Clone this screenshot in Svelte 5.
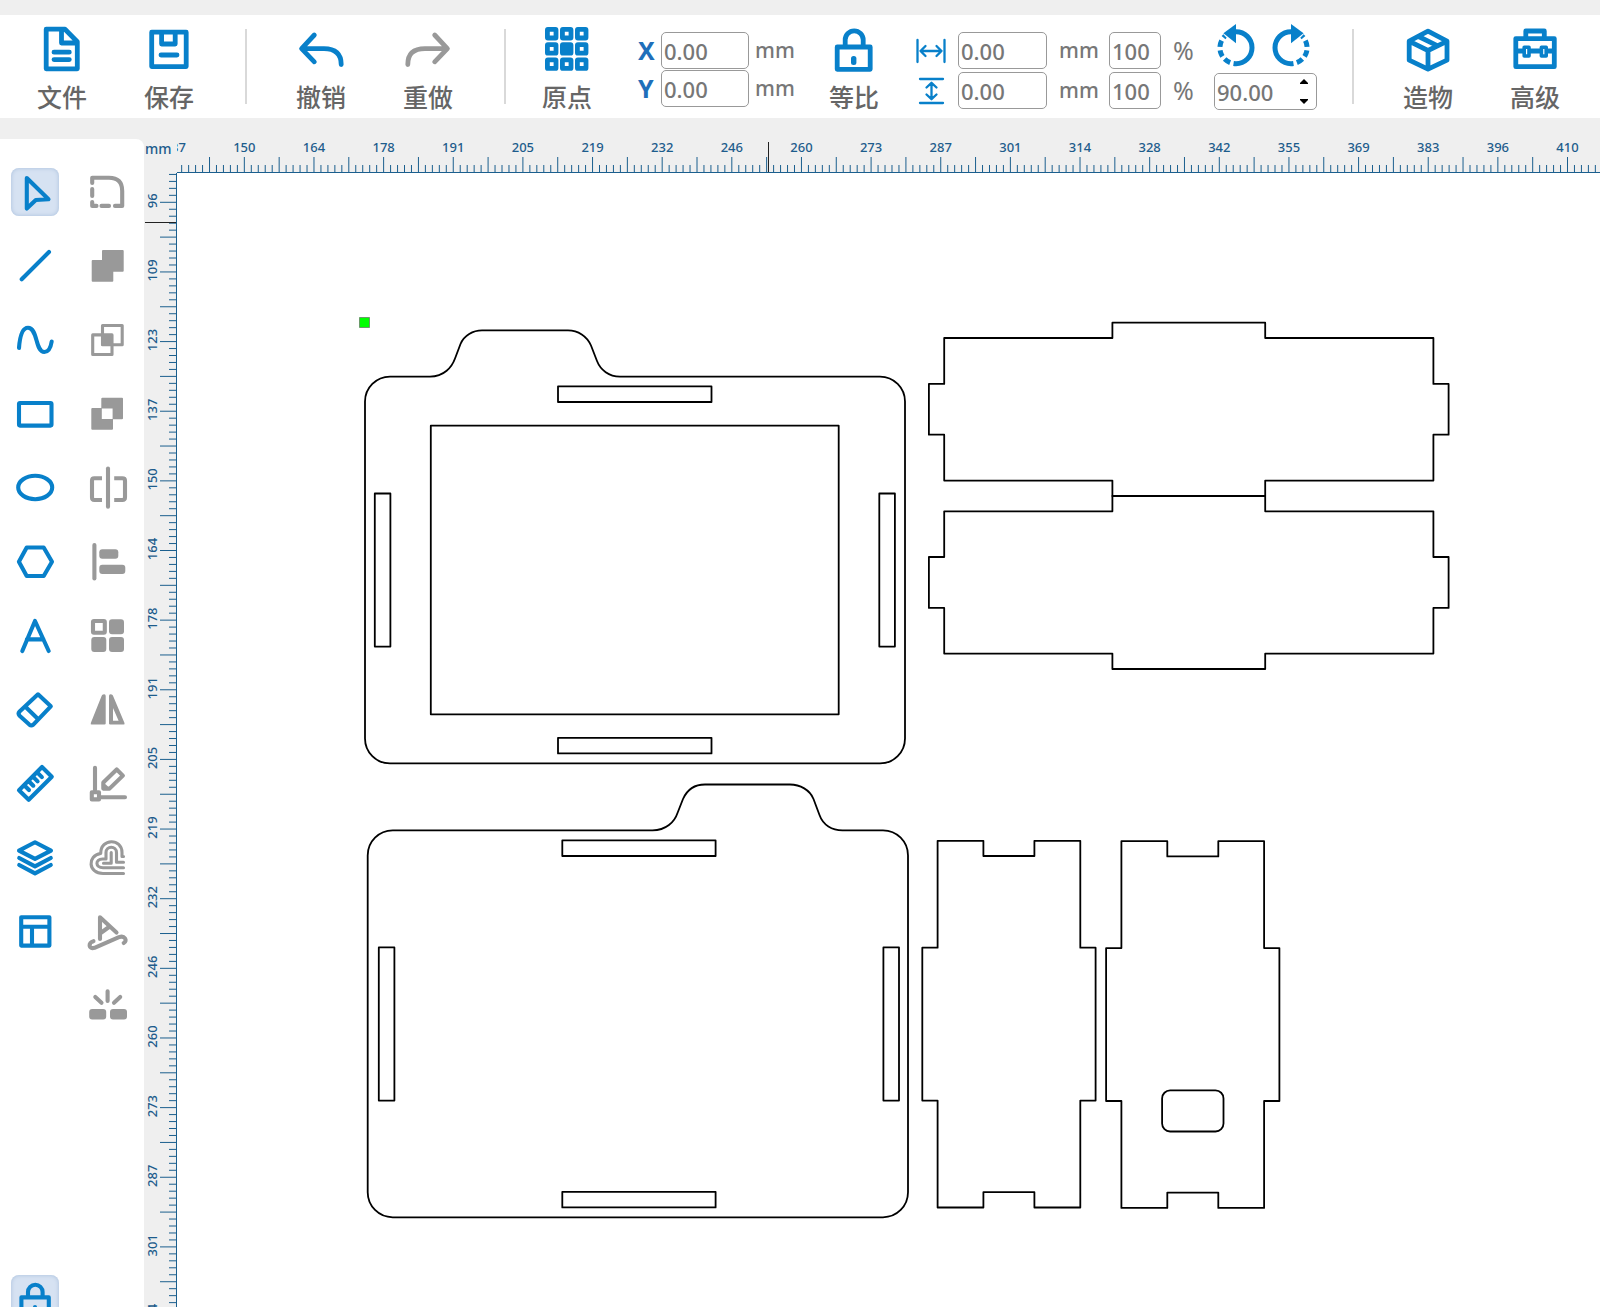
<script>
  const topLabels = [137, 150, 164, 178, 191, 205, 219, 232, 246, 260, 273, 287, 301, 314, 328, 342, 355, 369, 383, 396, 410];
  const sideLabels = [96, 109, 123, 137, 150, 164, 178, 191, 205, 219, 232, 246, 260, 273, 287, 301, 314];
  const step = 69.64;

  function makeTicks(start, count) {
    return Array.from({ length: count }, (_, i) => ({
      pos: start + (i * step) / 10,
      long: i % 5 === 0
    }));
  }

  const topTicks = makeTicks(-2.3, 400);
  const sideTicks = makeTicks(29.3 - step, 300);

  let x = $state('0.00');
  let y = $state('0.00');
  let width = $state('0.00');
  let height = $state('0.00');
  let scaleX = $state('100');
  let scaleY = $state('100');
  let angle = $state('90.00');

  function turn(delta) {
    angle = (parseFloat(angle) + delta).toFixed(2);
  }

  const tools = [
    ['选择', 'select'], ['圆角', 'fillet'],
    ['直线', 'line'], ['并集', 'union'],
    ['曲线', 'curve'], ['交集', 'intersect'],
    ['矩形', 'rect'], ['差集', 'exclude'],
    ['椭圆', 'ellipse'], ['拆分', 'split'],
    ['多边形', 'hexagon'], ['对齐', 'align'],
    ['文本', 'text'], ['阵列', 'array'],
    ['橡皮擦', 'eraser'], ['镜像', 'mirror'],
    ['测量', 'ruler'], ['编辑节点', 'node'],
    ['图层', 'layers'], ['偏移', 'offset'],
    ['布局', 'layout'], ['路径文字', 'pathtext'],
    ['', ''], ['打散', 'explode']
  ];
</script>

{#snippet toolIcon(name)}
  <svg class="icon" viewBox="0 0 48 48" aria-hidden="true">
    {#if name === 'select'}
      <path d="M15.8 10 37.5 31.3 24.8 32 15.8 40.6Z" />
    {:else if name === 'fillet'}
      <path d="M9.2 15V9.8H26Q39.2 9.8 39.2 23V37.9H32M9.2 21V28M9.2 34V37.9H13.5M18.5 37.9H26" />
    {:else if name === 'line'}
      <path d="M10.7 37.3 38 10" />
    {:else if name === 'union'}
      <path class="fill" d="M20 8H39.7Q40.7 8 40.7 9V28.7Q40.7 29.7 39.7 29.7H30.3V38.7Q30.3 39.7 29.3 39.7H9.7Q8.7 39.7 8.7 38.7V19Q8.7 18 9.7 18H19V9Q19 8 20 8Z" />
    {:else if name === 'curve'}
      <path d="M8 32C9 18 12 11.7 17 11.7C27 11.7 24 36 33.3 36C38 36 40 30 40.7 25.5" />
    {:else if name === 'intersect'}
      <path class="fine" d="M19.5 9.5H39.2V28.7H19.5ZM9.7 18.9H29V38.5H9.7Z" />
      <path class="fill" d="M18.5 18H30V29.7H18.5Z" />
    {:else if name === 'rect'}
      <rect x="8" y="13" width="32.5" height="22.6" rx="1" />
    {:else if name === 'exclude'}
      <path class="fill" fill-rule="evenodd" d="M19.3 7.7H39Q40 7.7 40 8.7V28.3Q40 29.3 39 29.3H30V38.7Q30 39.7 29 39.7H9.3Q8.3 39.7 8.3 38.7V19Q8.3 18 9.3 18H18.3V8.7Q18.3 7.7 19.3 7.7ZM18.8 18.4V29H29.6V18.4Z" />
    {:else if name === 'ellipse'}
      <ellipse cx="24.2" cy="23.5" rx="17" ry="11.7" />
    {:else if name === 'split'}
      <path d="M25 4.6V42.7" />
      <path class="butt" d="M19 14.2H11.3Q9 14.2 9 16.5V33.6Q9 36 11.3 36H19M31.2 14.2H39.3Q42 14.2 42 16.5V33.6Q42 36 39.3 36H31.2" />
    {:else if name === 'hexagon'}
      <path d="M15.7 9.5H32.7L41 23.7 32.7 38H15.7L7.9 23.7Z" />
    {:else if name === 'align'}
      <path d="M11.4 7V40.5" />
      <rect class="fill" x="16.3" y="11.3" width="19" height="9.4" rx="3" />
      <rect class="fill" x="16.3" y="26.7" width="26" height="9.4" rx="3" />
    {:else if name === 'text'}
      <path d="M11.3 39 24 9 37.7 39M15.8 27.4H32.5" />
    {:else if name === 'array'}
      <rect x="10" y="9" width="11.8" height="11.8" rx="1" />
      <rect class="fill" x="26" y="7.3" width="15" height="15" rx="3" />
      <rect class="fill" x="8.3" y="25" width="15" height="15" rx="3" />
      <rect class="fill" x="26" y="25" width="15" height="15" rx="3" />
    {:else if name === 'eraser'}
      <path d="M27 8.3 39.8 20.3 22.3 38.6Q20.3 40.2 18.3 38.6L8.6 29.8Q6.6 27.6 8.6 25.5ZM14.4 20.8 26.2 32.3" />
    {:else if name === 'mirror'}
      <path class="fill" d="M20 8.6Q22.7 7.6 22.7 10V37.5Q22.7 38.6 21.5 38.6H8.8Q7.1 38.6 7.9 36.7L18.6 10Q19 8.8 20 8.6Z" />
      <path class="fill" fill-rule="evenodd" d="M28.7 8.6Q26 7.6 26 10V37.5Q26 38.6 27.2 38.6H40.5Q42.2 38.6 41.4 36.7L30.1 10Q29.7 8.8 28.7 8.6ZM30 22 35.6 34.8H30Z" />
    {:else if name === 'ruler'}
      <path d="M31 7 40.8 16.7 17.7 39.8 8 30.2ZM13.5 25.5 18 30M17.8 21.2 22.3 25.7M22.1 16.9 26.6 21.4M26.4 12.6 30.9 17.1" />
    {:else if name === 'node'}
      <path d="M12 7.7V30M18 37.3H42" />
      <rect x="8.8" y="32.2" width="7.2" height="7.2" />
      <path d="M33.7 9.5 39.9 15.6 26.5 28.6H20.3V22.5ZM20.3 25 24.2 28.6" />
    {:else if name === 'layers'}
      <path d="M24 8.3 40 16.6 24 24.9 8 16.6ZM8.2 24 24 32.4 39.8 24M8.2 31 24 39.4 39.8 31" />
    {:else if name === 'offset'}
      <path class="fine" d="M40.5 39.5H20C5 39.5 4 21.5 17.7 19.5C17.7 3.8 39 4.2 39 18.5V22.5H40.5M40.5 33.8H20C12 33.8 12 25 19.5 25H23V18.5C23 11.5 33.5 11.5 33.5 18.5V28.2H40.5M20.5 29.2H28.2V18.5" />
    {:else if name === 'layout'}
      <path d="M10.2 9.2H38.4V37.6H10.2ZM10.2 18.8H38.4M21 18.8V37.6" />
    {:else if name === 'pathtext'}
      <path d="M17 31V9.3L33.5 24.5M17 25.5 26 19" />
      <path d="M10.5 33.2C4.8 34.5 5.5 41.6 11.5 39.8L36 29.2C41.5 27 45 32.5 40.7 35" />
    {:else if name === 'explode'}
      <path d="M24.6 9.3V19M12.3 15 18.5 20.8M37.2 15 31 20.8" />
      <rect class="fill" x="6.2" y="27" width="17" height="10.5" rx="3" />
      <rect class="fill" x="27" y="27" width="17" height="10.5" rx="3" />
    {:else if name === 'lock'}
      <path d="M17 22V17A7.3 7.3 0 0 1 31.6 17V22M10.4 22.4H37.8V43H10.4ZM24 32V36" />
    {/if}
  </svg>
{/snippet}

{#snippet command(label, name, off = false)}
  <button class="command" class:off type="button">
    <svg viewBox="0 0 44 44" aria-hidden="true">
      {#if name === 'file'}
        <path d="M6.2 2.2H25L37.3 14.8V41.8H6.2ZM21.5 2.5V16H37M14 25.2H29.3M14 32.6H29.3" />
      {:else if name === 'save'}
        <path d="M4.7 5.2H39.2V39.6H4.7ZM14.6 5.5V17H28.2V5.5M14 28H30" />
      {:else if name === 'undo'}
        <path d="M15.3 8 2.6 21.6 15.3 34.8M3 21.6H25Q42.2 21.6 42.2 37.5" />
      {:else if name === 'redo'}
        <path d="M28.7 8 41.4 21.6 28.7 34.8M41 21.6H19Q1.8 21.6 1.8 37.5" />
      {:else if name === 'origin'}
        {#each [0, 1, 2] as row}
          {#each [0, 1, 2] as col}
            <rect class="cell" class:solid={row === 1 && col === 1} x={2.4 + col * 15} y={2.4 + row * 15.2} width="8.6" height="8.6" rx="0.5" />
          {/each}
        {/each}
      {:else if name === 'lock'}
        <path d="M13.2 19V12.8A9 9 0 0 1 31.2 12.8V19M5.2 20H38.2V42.3H5.2Z" />
        <rect class="solid-fill" x="19" y="29" width="5.4" height="9" rx="2.5" />
      {:else if name === 'cube'}
        <path d="M22 4.2 41 14.2V33.2L22 42.2 3.2 33.2V14.2ZM3.5 14.4 22 23.5 40.8 14.4M22 23.5V42M12.6 9.5 31.2 18.6" />
      {:else if name === 'toolbox'}
        <path d="M12.8 11V4H31.3V11M2.8 11.6H41.3V39.7H2.8ZM3 24H41" />
        <rect class="clasp" x="11.2" y="20.3" width="4.8" height="8.7" />
        <rect class="clasp" x="28.4" y="20.3" width="4.8" height="8.7" />
      {/if}
    </svg>
    <span>{label}</span>
  </button>
{/snippet}

<div class="app">
  <header class="toolbar">
    <div class="commands">
      {@render command('文件', 'file')}
      {@render command('保存', 'save')}
    </div>
    <div class="divider"></div>
    <div class="commands">
      {@render command('撤销', 'undo')}
      {@render command('重做', 'redo', true)}
    </div>
    <div class="divider"></div>
    <div class="geometry">
      {@render command('原点', 'origin')}
      <div class="fields position">
        <label class="axis" for="pos-x">X</label>
        <input id="pos-x" type="text" bind:value={x} />
        <span class="unit">mm</span>
        <label class="axis" for="pos-y">Y</label>
        <input id="pos-y" type="text" bind:value={y} />
        <span class="unit">mm</span>
      </div>
      {@render command('等比', 'lock')}
      <div class="fields size">
        <label for="size-w" aria-label="宽度">
          <svg class="measure" viewBox="0 0 30 30" aria-hidden="true">
            <path d="M1.5 4V26M28.5 4V26M4.5 15H25.5M9.5 10 4.5 15 9.5 20M20.5 10 25.5 15 20.5 20" />
          </svg>
        </label>
        <input id="size-w" type="text" bind:value={width} />
        <span class="unit">mm</span>
        <input type="text" aria-label="宽度比例" bind:value={scaleX} />
        <span class="unit percent">%</span>
        <label for="size-h" aria-label="高度">
          <svg class="measure" viewBox="0 0 30 30" aria-hidden="true">
            <path d="M4 3H27M4 27H27M15.5 7V23M10.5 11.5 15.5 6.8 20.5 11.5M10.5 18.5 15.5 23.2 20.5 18.5" />
          </svg>
        </label>
        <input id="size-h" type="text" bind:value={height} />
        <span class="unit">mm</span>
        <input type="text" aria-label="高度比例" bind:value={scaleY} />
        <span class="unit percent">%</span>
      </div>
      <div class="rotation">
        <div class="turns">
          <button type="button" aria-label="逆时针旋转">
            <svg viewBox="0 0 44 44" aria-hidden="true">
              <path class="ring" d="M22 7.7A16 16 0 0 1 22 39.7" />
              <path class="ring" stroke-dasharray="6.5 3.5" stroke-dashoffset="4" d="M22 39.7A16 16 0 0 1 11 12" />
              <path class="tip" d="M9.4 9.2 22 0V19.3Z" />
            </svg>
          </button>
          <button type="button" aria-label="顺时针旋转">
            <svg viewBox="0 0 44 44" aria-hidden="true">
              <path class="ring" d="M22 7.7A16 16 0 0 0 22 39.7" />
              <path class="ring" stroke-dasharray="6.5 3.5" stroke-dashoffset="4" d="M22 39.7A16 16 0 0 0 33 12" />
              <path class="tip" d="M34.6 9.2 22 0V19.3Z" />
            </svg>
          </button>
        </div>
        <div class="spinner">
          <input type="text" aria-label="旋转角度" bind:value={angle} />
          <div class="arrows">
            <button type="button" aria-label="增加" onclick={() => turn(1)}>
              <svg viewBox="0 0 8 5" aria-hidden="true"><path d="M4 0 8 4V5H0V4Z" /></svg>
            </button>
            <button type="button" aria-label="减少" onclick={() => turn(-1)}>
              <svg viewBox="0 0 8 5" aria-hidden="true"><path d="M4 5 8 1V0H0V1Z" /></svg>
            </button>
          </div>
        </div>
      </div>
    </div>
    <div class="divider"></div>
    <div class="commands">
      {@render command('造物', 'cube')}
      {@render command('高级', 'toolbox')}
    </div>
  </header>

  <div class="workspace">
    <nav class="sidebar" aria-label="工具">
      <div class="tools">
        {#each tools as [label, name], i}
          {#if name}
            <button type="button" class="tool" class:active={name === 'select'} class:muted={i % 2 === 1} aria-label={label}>
              {@render toolIcon(name)}
            </button>
          {:else}
            <span></span>
          {/if}
        {/each}
      </div>
      <button type="button" class="tool active bottom" aria-label="锁定">
        {@render toolIcon('lock')}
      </button>
    </nav>

    <main class="board">
      <div class="corner">mm</div>
      <svg class="ruler" aria-hidden="true">
        {#each topTicks as tick}
          <line x1={tick.pos} x2={tick.pos} y1={tick.long ? 39 : 47} y2="54" />
        {/each}
        <line x1="0" x2="100%" y1="54.5" y2="54.5" />
        {#each topLabels as label, i}
          <text x={-2.3 + i * step} y="34">{label}</text>
        {/each}
        <line class="cursor" x1="591.5" x2="591.5" y1="24" y2="54" />
      </svg>
      <svg class="ruler" aria-hidden="true">
        {#each sideTicks as tick}
          <line x1={tick.long ? 16 : 25} x2="32" y1={tick.pos} y2={tick.pos} />
        {/each}
        <line x1="32.5" x2="32.5" y1="0" y2="100%" />
        {#each sideLabels as label, i}
          <text transform="translate(13 {27.8 + i * step}) rotate(-90)">{label}</text>
        {/each}
        <line class="cursor" x1="1" x2="32" y1="49.5" y2="49.5" />
      </svg>
      <svg class="canvas" role="img" aria-label="画布">
        <g transform="translate(-177 -173)">
          <rect class="handle" x="359.5" y="317.5" width="10" height="10" />

          <path d="M390 376.6H430C444 376.6 452 367 455 358.5L460.5 344C464 335.5 473 330.4 482 330.4H568C578 330.4 587 336 591 345.5L597 361C600.5 370 609 376.6 620 376.6H880A25 25 0 0 1 905 401.6V738.4A25 25 0 0 1 880 763.4H390A25 25 0 0 1 365 738.4V401.6A25 25 0 0 1 390 376.6Z" />
          <path d="M558 386.4H711.5V402H558ZM558 737.8H711.5V753.4H558ZM374.8 493.5H390.4V646.6H374.8ZM879.3 493.5H894.9V646.6H879.3ZM430.8 425.7H838.7V714.3H430.8Z" />

          <path d="M392.7 830.4H652.5C666 830.4 674.5 822 677.5 813L683 799C687 790 695 784.5 705 784.5H790C800 784.5 810 790 813.5 799L819.5 815C823 825 832 830.4 842.5 830.4H883A25 25 0 0 1 908 855.4V1192.3A25 25 0 0 1 883 1217.3H392.7A25 25 0 0 1 367.7 1192.3V855.4A25 25 0 0 1 392.7 830.4Z" />
          <path d="M562.3 840.4H715.6V856H562.3ZM562.3 1191.8H715.6V1207.4H562.3ZM378.8 947.4H394.4V1100.6H378.8ZM883.4 947.4H899V1100.6H883.4Z" />

          <path d="M944.2 338H1112.4V322.7H1265.2V338H1433.4V383.9H1448.6V434.7H1433.4V480.6H1265.2V496H1112.4V480.6H944.2V434.7H928.9V383.9H944.2Z" />
          <path d="M944.2 511.3H1112.4V496H1265.2V511.3H1433.4V557H1448.6V607.9H1433.4V653.6H1265.2V669H1112.4V653.6H944.2V607.9H928.9V557H944.2Z" />

          <path d="M937.6 840.8H983.4V856H1034.4V840.8H1080.3V947.7H1095.6V1100.6H1080.3V1207.5H1034.4V1192.2H983.4V1207.5H937.6V1100.6H922.3V947.7H937.6Z" />
          <path d="M1121.4 841.2H1167.3V856.4H1218.3V841.2H1264.1V948.1H1279.4V1101H1264.1V1207.9H1218.3V1192.6H1167.3V1207.9H1121.4V1101H1106.1V948.1H1121.4Z" />
          <rect x="1162.1" y="1090.4" width="61.4" height="41.1" rx="8" />
        </g>
      </svg>
    </main>
  </div>
</div>

<style>
  :global(body) {
    margin: 0;
    background: #efefef;
  }

  .app {
    --blue: #0880ca;
    --grey: #999;
    display: flex;
    flex-direction: column;
    height: 100vh;
    overflow: hidden;
    box-sizing: border-box;
    padding-top: 15px;
    background: #efefef;
    font-family: "Noto Sans", "Noto Sans CJK SC", sans-serif;
  }

  button {
    border: 0;
    padding: 0;
    background: none;
    font: inherit;
    cursor: pointer;
  }

  svg {
    display: block;
    fill: none;
  }

  .toolbar {
    display: flex;
    align-items: flex-start;
    flex: none;
    height: 103px;
    padding-left: 27px;
    background: #fff;
  }

  .commands {
    display: flex;
    gap: 37px;
  }

  .command {
    display: flex;
    flex-direction: column;
    align-items: center;
    gap: 10px;
    width: 70px;
    margin-top: 12px;
    color: #666;
    font-family: "Noto Sans CJK SC", sans-serif;
    font-size: 25px;
    font-weight: 500;
    line-height: 30px;
  }

  .command svg {
    width: 44px;
    height: 44px;
    overflow: visible;
    stroke: var(--blue);
    stroke-width: 4.8;
    stroke-linecap: round;
    stroke-linejoin: round;
  }

  .command.off svg {
    stroke: var(--grey);
  }

  .command .solid,
  .command .solid-fill {
    fill: var(--blue);
  }

  .command .solid-fill {
    stroke: none;
  }

  .command .clasp {
    fill: #fff;
    stroke-width: 3.6;
  }

  .divider {
    width: 2px;
    height: 75px;
    margin: 14px 39px 0 41px;
    background: #d9d9d9;
  }

  .geometry {
    display: flex;
    align-items: flex-start;
    margin-left: -13px;
    margin-right: -6px;
  }

  .fields {
    display: grid;
    grid-auto-rows: 37px;
    align-items: center;
    margin-top: 17px;
  }

  .position {
    grid-template-columns: 17px 88px 39px;
    gap: 1px 6px;
    margin-left: 36px;
    margin-right: 25px;
  }

  .size {
    grid-template-columns: 30px 89px 38px 52px 22px;
    gap: 3px 12px;
    margin-left: 27px;
  }

  .axis {
    color: #1f6fba;
    font-size: 25px;
    font-weight: 700;
    line-height: 37px;
  }

  input {
    box-sizing: border-box;
    width: 100%;
    min-width: 0;
    height: 37px;
    padding: 0 2px;
    border: 1px solid #999;
    border-radius: 5px;
    background: #fff;
    color: #777;
    font: 500 22px "Noto Sans", sans-serif;
  }

  .unit {
    color: #777;
    font-size: 21px;
    font-weight: 500;
    line-height: 37px;
  }

  .percent {
    font-size: 25px;
    font-weight: 400;
  }

  .measure {
    width: 30px;
    height: 30px;
    stroke: var(--blue);
    stroke-width: 2.3;
    stroke-linecap: round;
    stroke-linejoin: round;
  }

  .rotation {
    display: flex;
    flex-direction: column;
    gap: 5px;
    width: 103px;
    margin-top: 9px;
    margin-left: 19px;
  }

  .turns {
    display: flex;
    gap: 11px;
  }

  .turns svg {
    width: 44px;
    height: 44px;
  }

  .ring {
    stroke: var(--blue);
    stroke-width: 5;
  }

  .tip {
    fill: var(--blue);
  }

  .spinner {
    display: flex;
    box-sizing: border-box;
    height: 37px;
    border: 1px solid #999;
    border-radius: 5px;
  }

  .spinner input {
    flex: 1;
    height: 35px;
    border: 0;
  }

  .arrows {
    display: flex;
    flex-direction: column;
    justify-content: space-between;
    width: 24px;
    padding: 5px 0;
  }

  .arrows button {
    display: flex;
    justify-content: center;
  }

  .arrows svg {
    width: 8px;
    height: 5px;
    fill: #000;
  }

  .workspace {
    display: flex;
    flex: 1;
    min-height: 0;
  }

  .sidebar {
    display: flex;
    flex: none;
    flex-direction: column;
    box-sizing: border-box;
    width: 144px;
    margin-top: 21px;
    padding: 29px 0 0 11px;
    border-top-right-radius: 8px;
    background: #fff;
  }

  .tools {
    display: grid;
    grid-template-columns: 48px 48px;
    grid-auto-rows: 48px;
    gap: 26px 24px;
  }

  .tool {
    width: 48px;
    height: 48px;
    border-radius: 8px;
    color: var(--blue);
  }

  .tool.muted {
    color: var(--grey);
  }

  .tool.active {
    background: #d6e2f2;
    box-shadow: inset 0 0 4px #a9bfdc;
  }

  .bottom {
    flex: none;
    margin-top: auto;
    margin-bottom: -16px;
  }

  .icon {
    width: 48px;
    height: 48px;
    stroke: currentColor;
    stroke-width: 4.1;
    stroke-linecap: round;
    stroke-linejoin: round;
  }

  .icon .fill {
    fill: currentColor;
    stroke: none;
  }

  .icon .fine {
    stroke-width: 3.1;
  }

  .icon .butt {
    stroke-linecap: butt;
  }

  .board {
    display: grid;
    flex: 1;
    grid-template-columns: 33px 1fr;
    grid-template-rows: 55px 1fr;
    min-width: 0;
  }

  .corner {
    display: flex;
    align-items: flex-end;
    padding: 0 0 14px 1px;
    color: #1d5c8c;
    font-size: 14px;
    font-weight: 500;
    line-height: 20px;
  }

  .ruler,
  .canvas {
    width: 100%;
    height: 100%;
    overflow: hidden;
  }

  .ruler line {
    stroke: #1b5f8e;
  }

  .ruler .cursor {
    stroke: #222;
  }

  .ruler text {
    fill: #1d5c8c;
    font-size: 13px;
    font-weight: 500;
    text-anchor: middle;
  }

  .canvas {
    background: #fff;
    stroke: #000;
    stroke-width: 1.8;
    stroke-linejoin: round;
  }

  .canvas .handle {
    fill: #0f0;
    stroke: #6a9a6a;
    stroke-width: 1;
  }
</style>
